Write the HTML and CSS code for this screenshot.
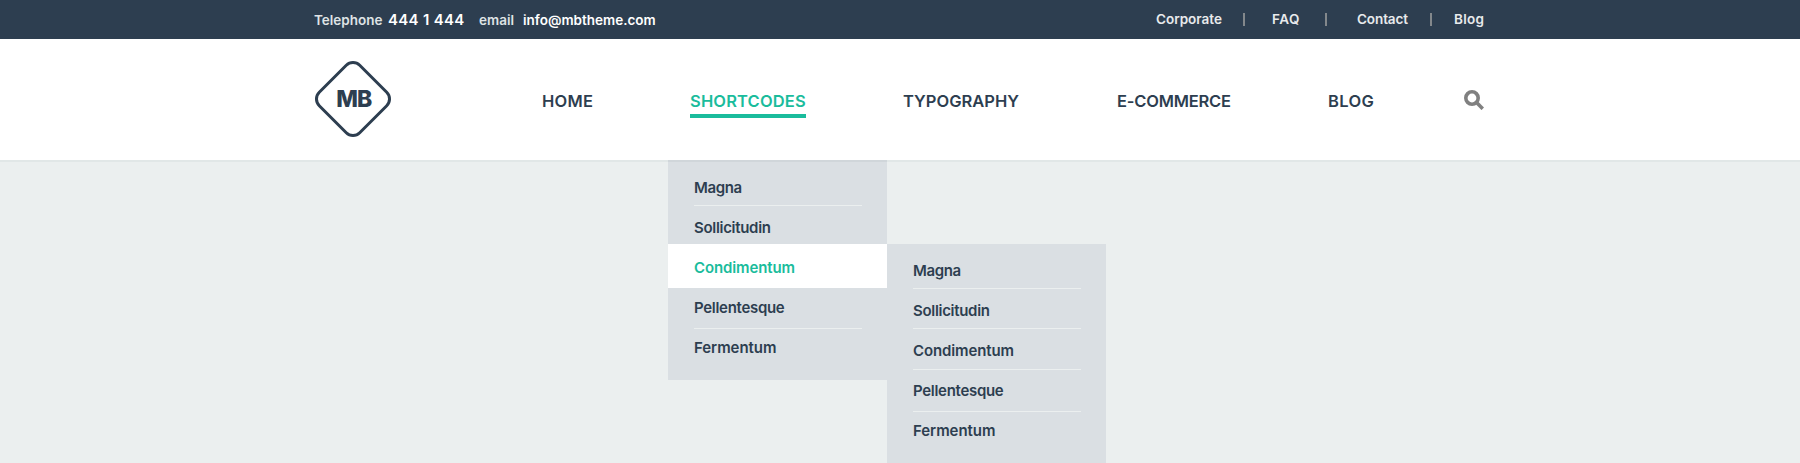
FILE: index.html
```
<!DOCTYPE html>
<html lang="en">
<head>
<meta charset="utf-8">
<title>MB Theme</title>
<link rel="stylesheet" href="styles.css">
</head>
<body>
<div class="topbar">
  <div class="container topbar-inner">
    <p class="contact">
      <span class="label phone-label">Telephone</span>
      <span class="phone">444 1 444</span>
      <span class="label email-label">email</span>
      <span class="email">info@mbtheme.com</span>
    </p>
    <ul class="links">
      <li class="l-corporate">Corporate</li>
      <li class="l-faq">FAQ</li>
      <li class="l-contact">Contact</li>
      <li class="l-blog">Blog</li>
    </ul>
  </div>
</div>
<header class="header">
  <div class="container header-inner">
    <svg class="logo" width="76" height="76" viewBox="0 0 76 76">
      <rect x="9.4" y="9.4" width="57.2" height="57.2" rx="9.5" transform="rotate(45 38 38)" fill="none" stroke="#2d3e50" stroke-width="3"/>
      <text class="logo-text" x="38.9" y="46" text-anchor="middle">MB</text>
    </svg>
    <ul class="nav">
      <li class="n-home"><span>HOME</span></li>
      <li class="n-shortcodes active"><span>SHORTCODES</span>
        <ul class="menu">
          <li><span class="w-mag">Magna</span></li>
          <li><span class="w-sol">Sollicitudin</span></li>
          <li class="current"><span class="w-con">Condimentum</span>
            <ul class="menu submenu">
              <li><span class="w-mag">Magna</span></li>
              <li><span class="w-sol">Sollicitudin</span></li>
              <li><span class="w-con">Condimentum</span></li>
              <li><span class="w-pel">Pellentesque</span></li>
              <li><span class="w-fer">Fermentum</span></li>
            </ul>
          </li>
          <li><span class="w-pel">Pellentesque</span></li>
          <li><span class="w-fer">Fermentum</span></li>
        </ul>
      </li>
      <li class="n-typography"><span>TYPOGRAPHY</span></li>
      <li class="n-ecommerce"><span>E-COMMERCE</span></li>
      <li class="n-blog"><span>BLOG</span></li>
    </ul>
    <svg class="search" width="20" height="20" viewBox="0 0 20 20" fill="none" stroke="#808080">
      <circle cx="8" cy="8" r="6.2" stroke-width="3.6"/>
      <path d="M12.3 12.3L18.8 18.8" stroke-width="3.6"/>
    </svg>
  </div>
</header>
</body>
</html>
```
FILE: styles.css
```
* { box-sizing: border-box; margin: 0; padding: 0; }
body {
  height: 463px;
  overflow: hidden;
  background: #ebefef;
  color: #2d3e50;
  font-family: Inter, "Liberation Sans", sans-serif;
  font-weight: 600;
}
ul { list-style: none; }
.container { width: 1170px; margin: 0 auto; }
.topbar { height: 39px; background: #2d3e50; }
.topbar-inner { display: flex; justify-content: space-between; }
.contact { display: flex; margin-left: -1px; padding-top: 8px; font-size: 13.5px; line-height: 24px; color: #fff; white-space: nowrap; }
.label { color: #dfe3e5; }
.phone-label { width: 74px; }
.phone { width: 91px; font-size: 15px; letter-spacing: 0.3px; }
.email-label { width: 44px; }
.links { display: flex; padding-top: 7px; font-size: 13.5px; line-height: 24px; color: #e8eaec; white-space: nowrap; }
.links li { position: relative; }
.l-corporate { width: 116px; }
.l-faq { width: 85px; letter-spacing: 0.5px; }
.l-contact { width: 97px; letter-spacing: -0.1px; }
.l-blog { width: 31px; letter-spacing: 0.25px; }
.links li:not(:last-child)::after { content: ""; position: absolute; top: 6px; width: 2px; height: 13px; background: #83888c; }
.l-corporate::after { left: 87px; }
.l-faq::after { left: 53px; }
.l-contact::after { left: 73px; }
.header { height: 121px; background: #fff; box-shadow: 0 2px 0 #e1e7e7; }
.header-inner { display: flex; }
.logo { margin-top: 22px; overflow: visible; }
.logo-text { font-size: 23px; font-weight: 800; letter-spacing: -0.9px; fill: #2d3e50; }
.nav { display: flex; margin-left: 151px; padding-top: 50px; font-size: 16.5px; line-height: 24px; white-space: nowrap; }
.nav > li { position: relative; }
.n-home { width: 148px; letter-spacing: 0.25px; }
.n-shortcodes { width: 213px; }
.n-typography { width: 214px; }
.n-ecommerce { width: 211px; letter-spacing: -0.2px; }
.n-blog { width: 46px; letter-spacing: 0.35px; }
.active > span { display: block; width: 116px; height: 29px; border-bottom: 4px solid #1abc9c; color: #1abc9c; letter-spacing: 0.15px; }
.menu { position: absolute; left: -22px; top: 71px; width: 219px; height: 220px; background: #dadfe3; box-shadow: inset 0 2px 0 #d0d6da; color: #2d3e50; font-size: 15px; }
.menu li { height: 46px; padding: 16px 0 0 26px; background: linear-gradient(#ebefef, #ebefef) 26px 100% / 168px 1px no-repeat; }
.menu li:nth-child(2) { height: 38px; padding-top: 10px; background: none; }
.menu li:nth-child(3) { height: 44px; padding-top: 12px; }
.menu li:nth-child(4) { height: 41px; padding-top: 8px; }
.menu li:nth-child(5) { height: 51px; padding-top: 7px; background: none; }
.menu .current { position: relative; background: #fff; color: #1abc9c; }
.menu .current > .menu { color: #2d3e50; }
.menu .submenu { left: 219px; top: 0; height: 219px; box-shadow: none; }
.menu .submenu li { height: 45px; padding-top: 15px; background: linear-gradient(#ebefef, #ebefef) 26px 100% / 168px 1px no-repeat; }
.menu .submenu li:nth-child(2) { height: 40px; padding-top: 10px; }
.menu .submenu li:nth-child(3) { height: 41px; padding-top: 10px; }
.menu .submenu li:nth-child(4) { height: 42px; padding-top: 9px; }
.menu .submenu li:nth-child(5) { height: 51px; padding-top: 7px; background: none; }
.w-mag { letter-spacing: -0.4px; }
.w-sol { letter-spacing: -0.3px; }
.w-con { letter-spacing: -0.12px; }
.w-pel { letter-spacing: -0.3px; }
.w-fer { letter-spacing: -0.05px; }
.search { margin: 51px 0 0 90px; }
```
